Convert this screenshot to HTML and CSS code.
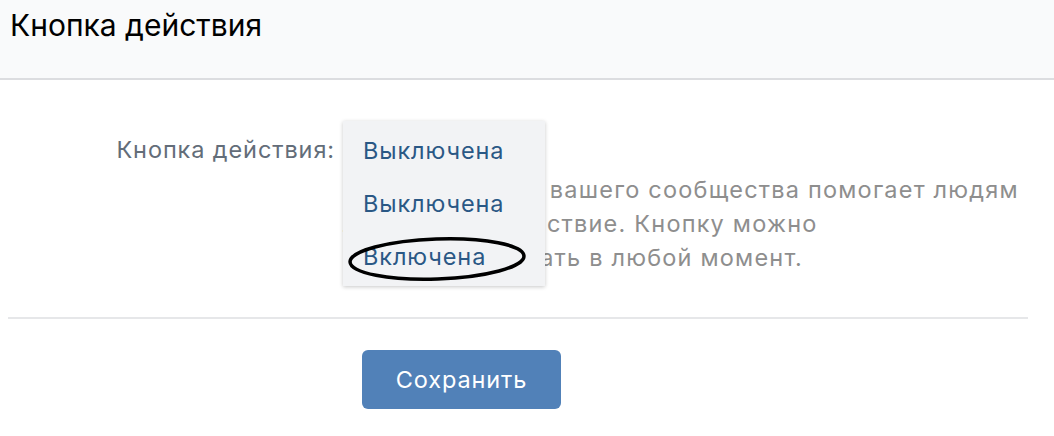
FILE: index.html
```html
<!DOCTYPE html>
<html lang="ru">
<head>
<meta charset="utf-8">
<title>Кнопка действия</title>
<link rel="stylesheet" href="styles.css">
</head>
<body>
<header class="header">
  <h1 class="title">Кнопка действия</h1>
</header>
<main class="content">
  <div class="row">
    <div class="label">Кнопка действия:</div>
    <div class="field">
      <div class="select-value">Выключена</div>
      <p class="desc">Кнопка в шапке вашего сообщества помогает людям<br>легко найти действие. Кнопку можно<br>включить и убрать в любой момент.</p>
      <ul class="menu">
        <li class="menu-item">Выключена</li>
        <li class="menu-item">Выключена</li>
        <li class="menu-item">Включена</li>
      </ul>
      <svg class="mark" width="190" height="56" viewBox="0 0 190 56">
        <ellipse cx="95" cy="28" rx="87" ry="20" transform="rotate(-2 95 28)" fill="none" stroke="#000" stroke-width="3.5"/>
      </svg>
    </div>
  </div>
  <hr class="divider">
  <div class="actions">
    <button class="btn">Сохранить</button>
  </div>
</main>
</body>
</html>
```

FILE: styles.css
```css
* { box-sizing: border-box; }
body {
  margin: 0;
  background: #fff;
  font-family: "Inter", "Liberation Sans", Arial, sans-serif;
  width: 1054px;
  height: 436px;
  overflow: hidden;
}
.header {
  height: 80px;
  background: #f9fafb;
  border-bottom: 2px solid #dcdde0;
  padding: 7px 0 0 10px;
}
.title {
  margin: 0;
  font-weight: normal;
  font-size: 30px;
  line-height: 36px;
  color: #000;
}
.content {
  padding-top: 41px;
}
.row {
  display: grid;
  grid-template-columns: 335px 1fr;
  column-gap: 8px;
}
.label {
  text-align: right;
  font-size: 23.5px;
  letter-spacing: 0.9px;
  color: #636d79;
  line-height: 30px;
  padding-top: 14px;
}
.field {
  position: relative;
}
.select-value {
  font-size: 23.5px;
  letter-spacing: 0.9px;
  line-height: 30px;
  padding: 14px 0 0 20px;
  color: #2a5885;
}
.desc {
  margin: 8px 0 0;
  font-size: 23.5px;
  letter-spacing: 1.2px;
  line-height: 34px;
  color: #8e8e8e;
}
.menu {
  position: absolute;
  left: 0;
  top: 0;
  width: 202px;
  margin: 0;
  padding: 3px 0;
  list-style: none;
  background: #f2f3f5;
  box-shadow: 0 1px 4px rgba(0, 0, 0, 0.22);
}
.menu-item {
  height: 53px;
  line-height: 53px;
  padding-left: 20px;
  font-size: 23.5px;
  letter-spacing: 0.9px;
  color: #2a5885;
}
.mark {
  position: absolute;
  left: -1px;
  top: 110px;
}
.divider {
  margin: 42px 26px 0 8px;
  border: 0;
  border-top: 2px solid #e6e7e9;
}
.actions {
  padding: 31px 0 0 362px;
}
.btn {
  width: 199px;
  height: 59px;
  border: 0;
  border-radius: 6px;
  background: #5181b8;
  color: #fff;
  font-family: inherit;
  font-size: 23.5px;
  letter-spacing: 0.9px;
  padding: 0;
}
```
